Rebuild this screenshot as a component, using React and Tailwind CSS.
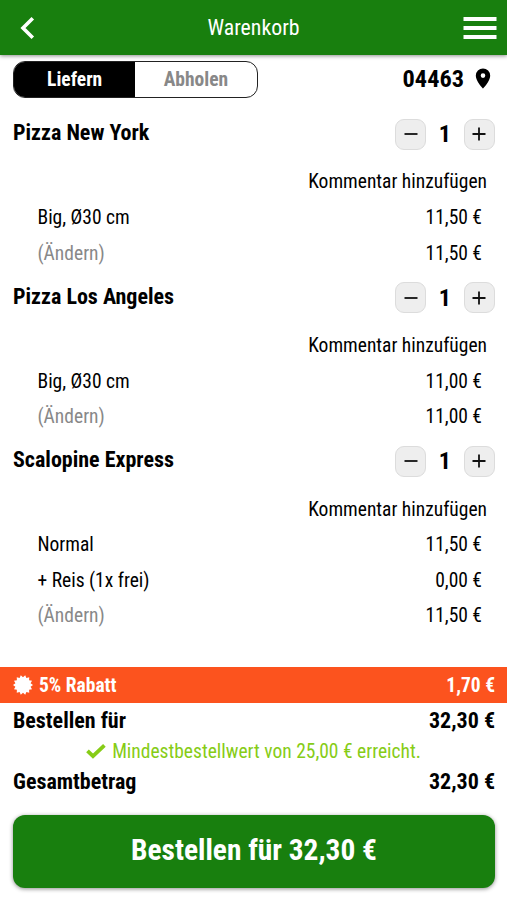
import React from "react";

const items = [
  { name: "Pizza New York", lines: [["Big, Ø30 cm", "11,50 €"]], total: "11,50 €" },
  { name: "Pizza Los Angeles", lines: [["Big, Ø30 cm", "11,00 €"]], total: "11,00 €" },
  {
    name: "Scalopine Express",
    lines: [
      ["Normal", "11,50 €"],
      ["+ Reis (1x frei)", "0,00 €"],
    ],
    total: "11,50 €",
  },
];

function StepButton({ plus }) {
  return (
    <button className="flex h-[31px] w-[31px] items-center justify-center rounded-[9px] border border-[#dcdcdc] bg-[#eeeeee]">
      <svg width="14" height="14" viewBox="0 0 14 14" stroke="#111" strokeWidth="1.8">
        <path d={plus ? "M0.5 7h13M7 0.5v13" : "M0.5 7h13"} />
      </svg>
    </button>
  );
}

function Line({ label, price, muted }) {
  return (
    <div className="flex h-[35.5px] items-center justify-between pt-[2px] pr-[25px] pl-[37.5px] text-[19.5px]">
      <span className={muted ? "text-[#888888]" : ""}>{label}</span>
      <span>{price}</span>
    </div>
  );
}

function Item({ item }) {
  return (
    <section className="mb-[9.7px]">
      <div className="flex h-9 items-center justify-between pr-[12.5px] pl-[13px]">
        <h2 className="-mt-0.5 text-[22px] font-bold">{item.name}</h2>
        <div className="flex items-center">
          <StepButton />
          <span className="w-[37.5px] text-center text-[24px] font-bold">1</span>
          <StepButton plus />
        </div>
      </div>
      <div className="mt-[11px] flex h-9 items-center justify-end pt-[2px] pr-[20px] text-[19.5px]">Kommentar hinzufügen</div>
      {item.lines.map(([label, price]) => (
        <Line key={label} label={label} price={price} />
      ))}
      <Line label="(Ändern)" price={item.total} muted />
    </section>
  );
}

const burst = Array.from({ length: 28 }, (_, i) => {
  const r = i % 2 ? 7.8 : 10;
  const a = (i * Math.PI) / 14;
  return `${10 + r * Math.cos(a)},${10 + r * Math.sin(a)}`;
}).join(" ");

export default function App() {
  return (
    <div className="flex h-[900px] w-[507px] flex-col overflow-hidden bg-white font-['Roboto_Condensed','Roboto',sans-serif] font-[450] leading-none text-black [font-stretch:75%]">
      <header className="flex h-[55px] shrink-0 items-center bg-[#187f0e] pr-[10px] pl-[20px] text-white shadow-[0_1px_4px_rgba(0,0,0,0.45)]">
        <svg width="34" height="22" viewBox="0 0 34 22" fill="none" stroke="white" strokeWidth="3.6">
          <path d="M12.8 1.3 3 11l9.8 9.7" />
        </svg>
        <h1 className="flex-1 pr-[10px] text-center text-[21.8px] font-[450]">Warenkorb</h1>
        <svg width="34" height="24" viewBox="0 0 34 24" fill="white">
          <path d="M0.5 1h33v4h-33zM0.5 10h33v4h-33zM0.5 19h33v4h-33z" />
        </svg>
      </header>
      <div className="mt-[6px] flex h-9 shrink-0 items-center justify-between pr-[16px] pl-[13px]">
        <div className="flex h-[37px] w-[244.5px] overflow-hidden rounded-[12px] border border-[#222] text-[19.5px] font-bold">
          <div className="flex w-1/2 items-center justify-center bg-black pt-[2px] text-white">Liefern</div>
          <div className="flex w-1/2 items-center justify-center pt-[2px] text-[#888888]">Abholen</div>
        </div>
        <div className="flex items-center gap-[11px] text-[24.3px] font-bold">
          <span>04463</span>
          <svg width="16" height="21" viewBox="0 0 16 21">
            <path fillRule="evenodd" d="M8 0.5a7.2 7.2 0 0 0-7.2 7.2C0.8 13 8 20.5 8 20.5s7.2-7.5 7.2-12.8A7.2 7.2 0 0 0 8 0.5zM8 5.3a2.3 2.3 0 1 1 0 4.6 2.3 2.3 0 0 1 0-4.6z" />
          </svg>
        </div>
      </div>
      <main className="mt-[19px] h-[551px] shrink-0">
        {items.map((item) => (
          <Item key={item.name} item={item} />
        ))}
      </main>
      <div className="flex h-9 shrink-0 items-center justify-between bg-[#fc531e] pr-[12px] pl-[13px] text-[19.5px] font-bold text-white">
        <span className="flex items-center gap-[6px]">
          <svg width="20" height="20" viewBox="0 0 20 20" fill="white">
            <polygon points={burst} />
          </svg>
          <span className="pt-[2px]">5% Rabatt</span>
        </span>
        <span className="pt-[2px]">1,70 €</span>
      </div>
      <div className="flex h-[34px] shrink-0 items-center justify-between pt-[1px] pr-[12px] pl-[13px] text-[22px] font-bold">
        <span>Bestellen für</span>
        <span>32,30 €</span>
      </div>
      <div className="flex h-[28px] shrink-0 items-center justify-center gap-[6px] text-[19.5px] text-[#86cc16]">
        <svg width="20" height="15" viewBox="0 0 20 15" fill="none" stroke="currentColor" strokeWidth="3.8">
          <path d="M1.5 6.8 7 12.2 18.4 1.4" />
        </svg>
        <span className="pt-[2px]">Mindestbestellwert von 25,00 € erreicht.</span>
      </div>
      <div className="flex h-[34px] shrink-0 items-center justify-between pr-[12px] pl-[13px] text-[22px] font-bold">
        <span>Gesamtbetrag</span>
        <span>32,30 €</span>
      </div>
      <button className="mx-[13px] mt-[15.5px] h-[73px] w-[482px] shrink-0 rounded-[12px] bg-[#187f0e] text-[29.4px] font-bold text-white shadow-[0_1px_4px_rgba(0,0,0,0.45)]">
        Bestellen für 32,30 €
      </button>
    </div>
  );
}
